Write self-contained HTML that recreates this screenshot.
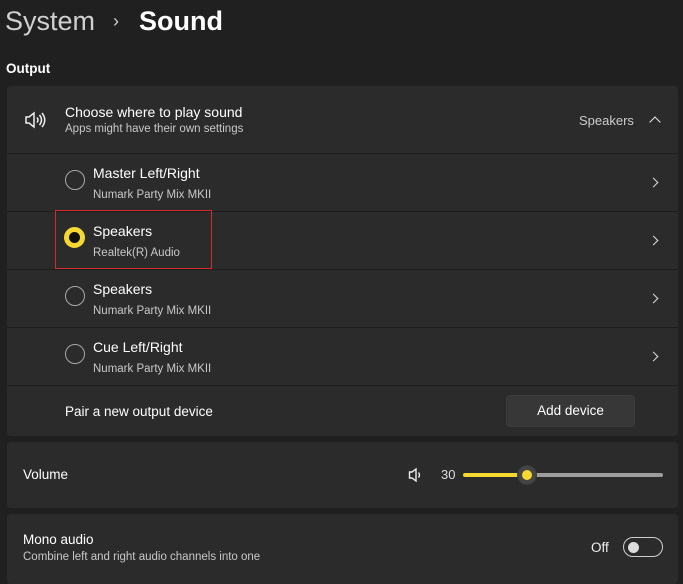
<!DOCTYPE html>
<html><head><style>
*{margin:0;padding:0;box-sizing:border-box}
body{width:683px;height:580px;background:#202020;font-family:"Liberation Sans",sans-serif;color:#fff;position:relative;overflow:hidden}
.a{position:absolute}
.card{position:absolute;left:7px;width:671px;background:#2b2b2b;border-radius:4px}
.t{font-size:14px;color:#fff;position:absolute;white-space:nowrap}
.s{font-size:11.5px;color:#c8c8c8;position:absolute;white-space:nowrap}
.radio{position:absolute;left:65px;width:20px;height:20px;border-radius:50%;border:1.5px solid #a8a8a8}
.chev{position:absolute;left:650px;width:7px;height:7px;border-right:1.5px solid #ddd;border-top:1.5px solid #ddd;transform:rotate(45deg)}
.sep{position:absolute;left:7px;width:671px;height:1px;background:#1d1d1d}
</style></head><body>
<div class="a" style="left:5px;top:6px;font-size:27px;color:#d0d0d0">System</div>
<div class="a" style="left:113px;top:11px;font-size:18px;color:#ccc">›</div>
<div class="a" style="left:139px;top:6px;font-size:27px;color:#fff;font-weight:bold">Sound</div>
<div class="a" style="left:6px;top:61px;font-size:13.5px;font-weight:bold">Output</div>

<div class="card" style="top:86px;height:350px"></div>
<svg class="a" style="left:24px;top:111px" width="22" height="18" viewBox="0 0 22 18" fill="none" stroke="#eee" stroke-width="1.5"><path d="M2 6h3l5-4v14l-5-4H2z"/><path d="M13 6.5q2 2.5 0 5"/><path d="M15.5 4q4 5 0 10"/><path d="M18 2q5.5 7 0 14"/></svg>
<div class="t" style="left:65px;top:104px">Choose where to play sound</div>
<div class="s" style="left:65px;top:123px">Apps might have their own settings</div>
<div class="s" style="left:579px;top:113px;font-size:13px;color:#ccc">Speakers</div>
<div class="a" style="left:651px;top:118px;width:8px;height:8px;border-left:1.5px solid #eee;border-top:1.5px solid #eee;transform:rotate(45deg)"></div>

<div class="sep" style="top:153px"></div>
<div class="radio" style="top:170px"></div>
<div class="t" style="left:93px;top:165px">Master Left/Right</div>
<div class="s" style="left:93px;top:189px">Numark Party Mix MKII</div>
<div class="chev" style="top:179px"></div>

<div class="sep" style="top:211px"></div>
<div class="a" style="left:64px;top:227px;width:21px;height:21px;border-radius:50%;border:5px solid #f5d830;background:#111"></div>
<div class="t" style="left:93px;top:223px">Speakers</div>
<div class="s" style="left:93px;top:247px">Realtek(R) Audio</div>
<div class="chev" style="top:237px"></div>
<div class="a" style="left:55px;top:210px;width:157px;height:59px;border:1.5px solid #d42b2b"></div>

<div class="sep" style="top:269px"></div>
<div class="radio" style="top:286px"></div>
<div class="t" style="left:93px;top:281px">Speakers</div>
<div class="s" style="left:93px;top:305px">Numark Party Mix MKII</div>
<div class="chev" style="top:295px"></div>

<div class="sep" style="top:327px"></div>
<div class="radio" style="top:344px"></div>
<div class="t" style="left:93px;top:339px">Cue Left/Right</div>
<div class="s" style="left:93px;top:363px">Numark Party Mix MKII</div>
<div class="chev" style="top:353px"></div>

<div class="sep" style="top:385px"></div>
<div class="t" style="left:65px;top:404px;font-size:13.5px">Pair a new output device</div>
<div class="a" style="left:506px;top:395px;width:129px;height:32px;background:#373737;border-radius:4px;border:1px solid #3c3c3c;font-size:13.5px;text-align:center;line-height:30px">Add device</div>

<div class="card" style="top:442px;height:66px"></div>
<div class="t" style="left:23px;top:467px;font-size:13.5px">Volume</div>
<svg class="a" style="left:408px;top:467px" width="14" height="16" viewBox="0 0 14 16" fill="none" stroke="#eee" stroke-width="1.4"><path d="M1.5 5h2.5l4-3v12l-4-3H1.5z"/><path d="M10.5 5.5q2 2.5 0 5"/></svg>
<div class="a" style="left:441px;top:467px;font-size:13px;color:#ddd">30</div>
<div class="a" style="left:463px;top:473px;width:62px;height:4px;background:#f5d830;border-radius:2px"></div>
<div class="a" style="left:530px;top:473px;width:133px;height:4px;background:#9e9e9e;border-radius:2px"></div>
<div class="a" style="left:517px;top:465px;width:20px;height:20px;border-radius:50%;background:#454545;border:1px solid #3a3a3a"></div>
<div class="a" style="left:522px;top:470px;width:10px;height:10px;border-radius:50%;background:#f5d830"></div>

<div class="card" style="top:514px;height:70px"></div>
<div class="t" style="left:23px;top:532px;font-size:13.5px">Mono audio</div>
<div class="s" style="left:23px;top:551px">Combine left and right audio channels into one</div>
<div class="a" style="left:591px;top:540px;font-size:13.5px;color:#eee">Off</div>
<div class="a" style="left:623px;top:537px;width:40px;height:20px;border-radius:10px;border:1px solid #cfcfcf"></div>
<div class="a" style="left:628px;top:542px;width:11px;height:11px;border-radius:50%;background:#ddd"></div>
</body></html>
